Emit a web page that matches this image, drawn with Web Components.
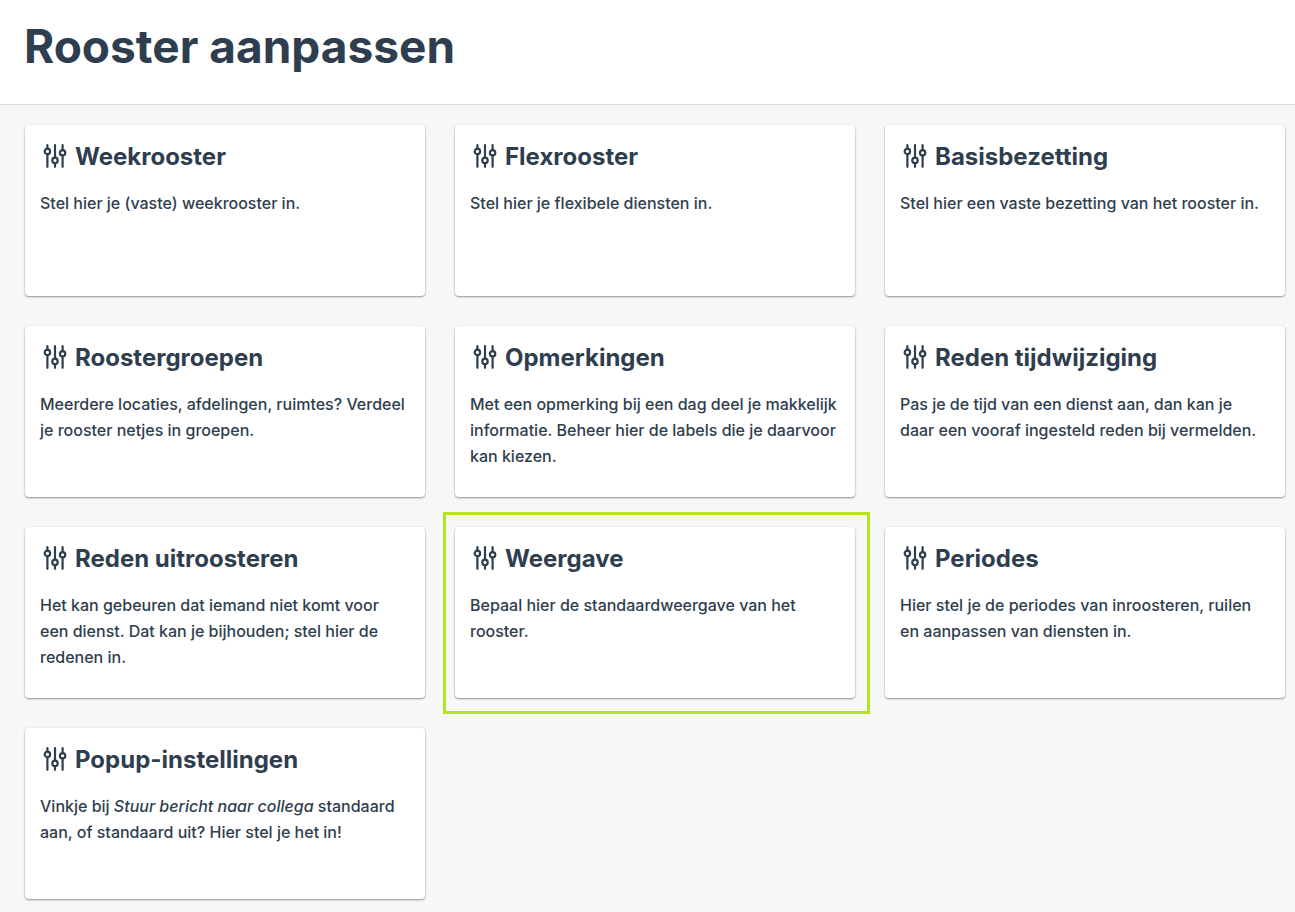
<!DOCTYPE html>
<html lang="nl">
<head>
<meta charset="utf-8">
<meta name="viewport" content="width=device-width, initial-scale=1">
<title>Rooster aanpassen</title>
<style>
  body {
    margin: 0;
    background: #f7f7f7;
    color: #2f3e4e;
    font-family: Inter, "Liberation Sans", sans-serif;
    font-size: 16px;
    line-height: 26px;
  }
</style>
</head>
<body>
  <page-header>Rooster aanpassen</page-header>
  <card-grid>
    <setting-card heading="Weekrooster">Stel hier je (vaste) weekrooster in.</setting-card>
    <setting-card heading="Flexrooster">Stel hier je flexibele diensten in.</setting-card>
    <setting-card heading="Basisbezetting">Stel hier een vaste bezetting van het rooster in.</setting-card>
    <setting-card heading="Roostergroepen">Meerdere locaties, afdelingen, ruimtes? Verdeel je rooster netjes in groepen.</setting-card>
    <setting-card heading="Opmerkingen">Met een opmerking bij een dag deel je makkelijk informatie. Beheer hier de labels die je daarvoor kan kiezen.</setting-card>
    <setting-card heading="Reden tijdwijziging">Pas je de tijd van een dienst aan, dan kan je daar een vooraf ingesteld reden bij vermelden.</setting-card>
    <setting-card heading="Reden uitroosteren">Het kan gebeuren dat iemand niet komt voor een dienst. Dat kan je bijhouden; stel hier de redenen in.</setting-card>
    <setting-card heading="Weergave" marked>Bepaal hier de standaardweergave van het rooster.</setting-card>
    <setting-card heading="Periodes">Hier stel je de periodes van inroosteren, ruilen en aanpassen van diensten in.</setting-card>
    <setting-card heading="Popup-instellingen">Vinkje bij <em>Stuur bericht naar collega</em> standaard aan, of standaard uit? Hier stel je het in!</setting-card>
  </card-grid>

<script>
class PageHeader extends HTMLElement {
  constructor() {
    super();
    this.attachShadow({ mode: "open" });
    this.shadowRoot.innerHTML = `
      <style>
        :host {
          display: block;
          padding: 16px 24px 28px;
          background: #fff;
          border-bottom: 1px solid #d9dbdb;
        }
        h1 {
          margin: 0;
          font-size: 46px;
          line-height: 60px;
          font-weight: 700;
        }
      </style>
      <header><h1><slot></slot></h1></header>
    `;
  }
}

class CardGrid extends HTMLElement {
  constructor() {
    super();
    this.attachShadow({ mode: "open" });
    this.shadowRoot.innerHTML = `
      <style>
        :host {
          display: block;
          padding: 20px 10px 12px 25px;
        }
        main {
          display: grid;
          grid-template-columns: repeat(3, 1fr);
          gap: 30px;
        }
        @media (max-width: 1000px) {
          main { grid-template-columns: repeat(2, 1fr); }
        }
        @media (max-width: 640px) {
          main { grid-template-columns: 1fr; }
        }
      </style>
      <main><slot></slot></main>
    `;
  }
}

// Three vertical sliders
class SlidersIcon extends HTMLElement {
  constructor() {
    super();
    this.attachShadow({ mode: "open" });
    this.shadowRoot.innerHTML = `
      <style>
        :host { display: block; flex: none; }
        svg { display: block; }
      </style>
      <svg width="24" height="24" viewBox="0 0 24 24" fill="none" stroke="currentColor" stroke-width="2.2" stroke-linecap="round" aria-hidden="true">
        <path d="M4.4 1.2v3.4M4.4 10V22.8M12 1.2v12.2M12 19.4v3.4M19.6 1.2v4.6M19.6 11.4v11.4"/>
        <circle cx="4.4" cy="7.4" r="2.7"/>
        <circle cx="12" cy="16.4" r="2.7"/>
        <circle cx="19.6" cy="8.8" r="2.7"/>
      </svg>
    `;
  }
}

class SettingCard extends HTMLElement {
  constructor() {
    super();
    this.attachShadow({ mode: "open" });

    const template = document.createElement("template");
    template.innerHTML = `
      <style>
        :host {
          display: block;
          position: relative;
        }
        a {
          display: block;
          box-sizing: border-box;
          height: 100%;
          min-height: 171px;
          padding: 15px 15px 26px;
          background: #fff;
          border-radius: 4px;
          box-shadow: 0 1px 2px rgba(0, 0, 0, 0.4), 0 0 3px rgba(0, 0, 0, 0.06);
          color: inherit;
          text-decoration: none;
          transition: transform 0.2s ease;
        }
        a:hover {
          transform: translateY(-1px);
        }
        h2 {
          display: flex;
          align-items: center;
          gap: 8px;
          margin: 0 0 16px;
          padding-left: 3px;
          font-size: 24px;
          line-height: 34px;
          font-weight: 700;
        }
        sliders-icon {
          margin-bottom: 2px;
        }
        p {
          margin: 0;
          font-weight: 500;
        }
        :host([marked])::after {
          content: "";
          position: absolute;
          inset: -15px -15px -16px -12px;
          border: 3px solid #b5e31d;
          pointer-events: none;
        }
      </style>
      <a href="#">
        <h2><sliders-icon></sliders-icon><span></span></h2>
        <p><slot></slot></p>
      </a>
    `;
    this.shadowRoot.appendChild(template.content.cloneNode(true));
  }

  static get observedAttributes() {
    return ["heading"];
  }

  attributeChangedCallback() {
    this.render();
  }

  render() {
    this.shadowRoot.querySelector("h2 span").textContent = this.getAttribute("heading");
  }
}

customElements.define("page-header", PageHeader);
customElements.define("card-grid", CardGrid);
customElements.define("sliders-icon", SlidersIcon);
customElements.define("setting-card", SettingCard);
</script>
</body>
</html>
